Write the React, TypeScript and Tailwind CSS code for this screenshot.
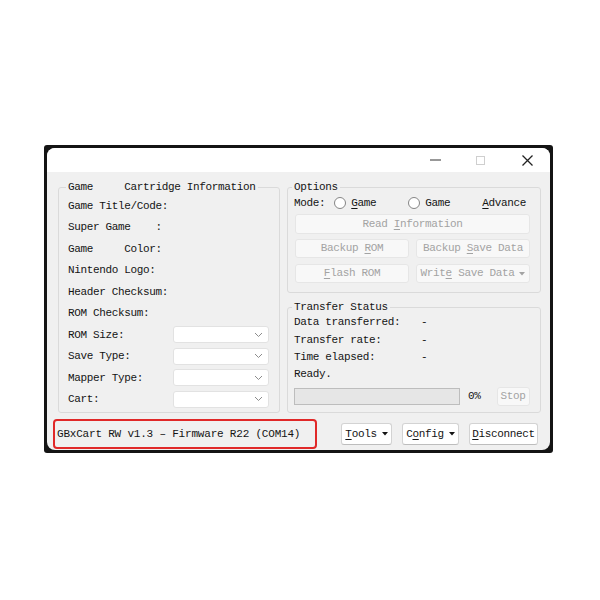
import React from 'react';

const mono = "font-['Liberation_Mono',monospace] text-[11px] tracking-[-0.35px] text-[#141414]";

const U = ({ children }: { children: React.ReactNode }) => (
  <span className="underline underline-offset-2 decoration-1">{children}</span>
);

const Caret = () => (
  <svg width="6" height="4" viewBox="0 0 6 4" className="ml-[5px]">
    <path d="M0 0h6L3 3.5z" fill="currentColor" />
  </svg>
);

const Chevron = () => (
  <svg width="9" height="6" viewBox="0 0 9 6">
    <path d="M1 1l3.5 3.5L8 1" fill="none" stroke="#8c8c8c" strokeWidth="1" />
  </svg>
);

const Radio = () => (
  <span className="block w-[12px] h-[12px] rounded-full border border-[#858585] bg-white shrink-0" />
);

const Combo = () => (
  <div className="w-[96px] h-[17px] bg-white border border-[#e2e2e2] rounded-[3px] flex items-center justify-end pr-[5px]">
    <Chevron />
  </div>
);

// greyed out push button
const Disabled = ({ w, h = 19, children }: { w: number; h?: number; children: React.ReactNode }) => (
  <div
    className="bg-[#f8f8f8] border border-[#e6e6e6] rounded-[3px] text-[#a3a3a3] flex items-center justify-center whitespace-pre"
    style={{ width: w, height: h }}
  >
    {children}
  </div>
);

const Button = ({ w, children }: { w: number; children: React.ReactNode }) => (
  <div
    className="h-[22px] bg-white border border-[#d3d3d3] border-b-[#bdbdbd] rounded-[3px] flex items-center justify-center"
    style={{ width: w }}
  >
    {children}
  </div>
);

const cartRows: [string, boolean][] = [
  ['Game Title/Code:', false],
  ['Super Game    :', false],
  ['Game     Color:', false],
  ['Nintendo Logo:', false],
  ['Header Checksum:', false],
  ['ROM Checksum:', false],
  ['ROM Size:', true],
  ['Save Type:', true],
  ['Mapper Type:', true],
  ['Cart:', true],
];

export default function App() {
  return (
    <div className={`w-[600px] h-[600px] bg-white pt-[145px] pl-[44px] ${mono}`}>
      <div className="w-[509px] h-[308px] bg-[#141414] rounded-[3px] p-[3px]">
        <div className="h-full bg-[#f0f0f0] rounded-[8px] overflow-hidden flex flex-col">
          {/* title bar */}
          <div className="h-[24px] bg-white flex items-center justify-end pr-[17px] shrink-0">
            <svg width="11" height="2" viewBox="0 0 11 2">
              <path d="M0 1h11" stroke="#333" strokeWidth="1.2" />
            </svg>
            <svg width="9" height="9" viewBox="0 0 9 9" className="ml-[35px]">
              <rect x="0.5" y="0.5" width="8" height="8" fill="none" stroke="#cfcfcf" strokeWidth="1" />
            </svg>
            <svg width="11" height="11" viewBox="0 0 11 11" className="ml-[37px]">
              <path d="M0.5 0.5l10 10M10.5 0.5l-10 10" stroke="#222" strokeWidth="1.3" />
            </svg>
          </div>

          <div className="flex-1 flex flex-col pt-[8px]">
            <div className="flex pl-[11px] h-[233px]">
              {/* cartridge info */}
              <fieldset className="w-[222px] h-[233px] border border-[#dadada] rounded-[3px] pl-[7px]">
                <legend className="px-[2px] leading-[14px] whitespace-pre">Game     Cartridge Information</legend>
                <div className="ml-[2px] mt-[1px]">
                  {cartRows.map(([label, combo]) => (
                    <div key={label} className="h-[21.5px] flex items-center">
                      <span className="w-[105px] whitespace-pre">{label}</span>
                      {combo && <Combo />}
                    </div>
                  ))}
                </div>
              </fieldset>

              <div className="ml-[7px] w-[254px] flex flex-col gap-[7px]">
                {/* options */}
                <fieldset className="h-[113px] border border-[#dadada] rounded-[3px] pl-[4px]">
                  <legend className="px-[2px] leading-[14px]">Options</legend>
                  <div className="ml-[2px] mt-[1px] h-[16px] flex items-center whitespace-pre">
                    <span>Mode:</span>
                    <span className="ml-[9px]"><Radio /></span>
                    <span className="ml-[5px]"><U>G</U>ame</span>
                    <span className="ml-[32px]"><Radio /></span>
                    <span className="ml-[5px]">Game</span>
                    <span className="ml-[32px]"><U>A</U>dvance</span>
                  </div>
                  <div className="ml-[3px] mt-[3px]">
                    <Disabled w={235} h={20}>Read <U>I</U>nformation</Disabled>
                  </div>
                  <div className="ml-[3px] mt-[5px] flex gap-[7px]">
                    <Disabled w={114}>Backup <U>R</U>OM</Disabled>
                    <Disabled w={114}>Backup <U>S</U>ave Data</Disabled>
                  </div>
                  <div className="ml-[3px] mt-[6px] flex gap-[7px]">
                    <Disabled w={114}><U>F</U>lash ROM</Disabled>
                    <Disabled w={114}>Writ<U>e</U> Save Data<Caret /></Disabled>
                  </div>
                </fieldset>

                {/* transfer status */}
                <fieldset className="h-[113px] border border-[#dadada] rounded-[3px] pl-[4px]">
                  <legend className="px-[2px] leading-[14px]">Transfer Status</legend>
                  <div className="ml-[2px]">
                    {['Data transferred:', 'Transfer rate:', 'Time elapsed:'].map((l) => (
                      <div key={l} className="h-[17.3px] flex items-center">
                        <span className="w-[127px]">{l}</span>
                        <span>-</span>
                      </div>
                    ))}
                    <div className="h-[17.3px] flex items-center">Ready.</div>
                    <div className="mt-[4px] flex items-center">
                      <div className="w-[166px] h-[17px] bg-[#e6e6e6] border border-[#bdbdbd]" />
                      <span className="ml-[8px]">0%</span>
                      <div className="ml-[16px]">
                        <Disabled w={33}>Stop</Disabled>
                      </div>
                    </div>
                  </div>
                </fieldset>
              </div>
            </div>

            {/* status line and main buttons */}
            <div className="mt-[6px] h-[30px] flex items-center pl-[6px] pr-[12px]">
              <div className="w-[264px] h-[30px] border-2 border-[#e02828] rounded-[4px] flex items-center pl-[2px] whitespace-pre tracking-[-0.2px]">
                GBxCart RW v1.3 – Firmware R22 (COM14)
              </div>
              <div className="ml-auto flex gap-[10px]">
                <Button w={51}><U>T</U>ools<Caret /></Button>
                <Button w={57}>C<U>o</U>nfig<Caret /></Button>
                <Button w={69}><U>D</U>isconnect</Button>
              </div>
            </div>
          </div>
        </div>
      </div>
    </div>
  );
}
